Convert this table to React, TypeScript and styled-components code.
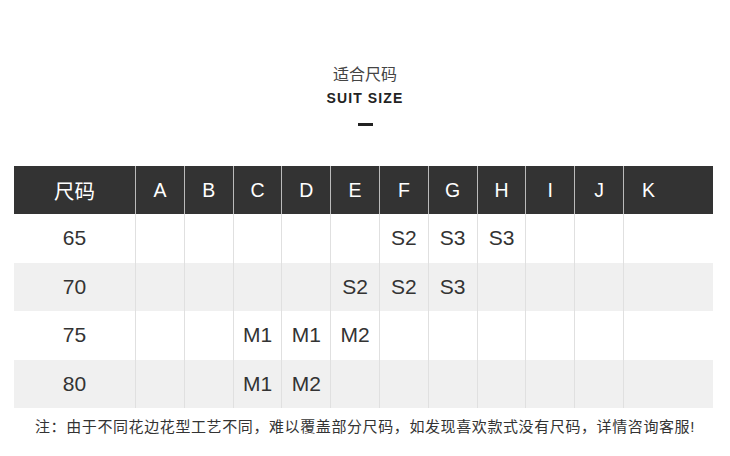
import React from 'react'
import styled, { createGlobalStyle } from 'styled-components'

const GlobalStyle = createGlobalStyle`
  html, body {
    margin: 0;
    padding: 0;
    background: #fff;
  }
  body {
    font-family: "Liberation Sans", "Noto Sans CJK SC", sans-serif;
    color: #333;
  }
`

const Page = styled.div`
  width: 730px;
  height: 456px;
  display: flex;
  flex-direction: column;
  align-items: center;
  padding-top: 64px;
  box-sizing: border-box;
`

const TitleCn = styled.div`
  font-size: 16px;
  line-height: 22px;
  color: #444;
`

const TitleEn = styled.div`
  font-size: 14px;
  font-weight: bold;
  letter-spacing: 1.1px;
  line-height: 18px;
  margin-top: 3px;
  color: #222;
`

const Dash = styled.div`
  width: 15px;
  height: 3px;
  background: #222;
  margin-top: 16px;
`

const Table = styled.div`
  width: 699px;
  margin-top: 40px;
  align-self: flex-start;
  margin-left: 14px;
  display: grid;
  grid-template-columns: 121px repeat(10, 48.8px) 1fr;
`

const HeadCell = styled.div<{ $first?: boolean; $last?: boolean }>`
  height: 48px;
  background: #333;
  color: #fff;
  font-size: ${p => (p.$first ? '20.5px' : '19.5px')};
  display: flex;
  align-items: center;
  justify-content: ${p => (p.$last ? 'flex-start' : 'center')};
  padding-left: ${p => (p.$last ? '18px' : '0')};
  border-left: ${p => (p.$first ? 'none' : '1px solid #bbb')};
  box-sizing: border-box;
`

const Cell = styled.div<{ $alt: boolean; $first?: boolean }>`
  height: 48.5px;
  background: ${p => (p.$alt ? '#f0f0f0' : '#fff')};
  font-size: 21px;
  color: #333;
  display: flex;
  align-items: center;
  justify-content: center;
  border-left: ${p => (p.$first ? 'none' : '1px solid #e0e0e0')};
  box-sizing: border-box;
`

const Note = styled.div`
  margin-top: 7px;
  font-size: 15px;
  letter-spacing: 0.6px;
  color: #333;
  white-space: nowrap;
`

const letters = ['A', 'B', 'C', 'D', 'E', 'F', 'G', 'H', 'I', 'J', 'K']

const rows: { size: string; cells: Record<string, string> }[] = [
  { size: '65', cells: { F: 'S2', G: 'S3', H: 'S3' } },
  { size: '70', cells: { E: 'S2', F: 'S2', G: 'S3' } },
  { size: '75', cells: { C: 'M1', D: 'M1', E: 'M2' } },
  { size: '80', cells: { C: 'M1', D: 'M2' } },
]

export default function App() {
  return (
    <Page>
      <GlobalStyle />
      <TitleCn>适合尺码</TitleCn>
      <TitleEn>SUIT SIZE</TitleEn>
      <Dash />
      <Table>
        <HeadCell $first>尺码</HeadCell>
        {letters.map(l => (
          <HeadCell key={l} $last={l === 'K'}>{l}</HeadCell>
        ))}
        {rows.map((row, i) => (
          <React.Fragment key={row.size}>
            <Cell $alt={i % 2 === 1} $first>{row.size}</Cell>
            {letters.map(l => (
              <Cell key={l} $alt={i % 2 === 1}>{row.cells[l] || ''}</Cell>
            ))}
          </React.Fragment>
        ))}
      </Table>
      <Note>注：由于不同花边花型工艺不同，难以覆盖部分尺码，如发现喜欢款式没有尺码，详情咨询客服!</Note>
    </Page>
  )
}
